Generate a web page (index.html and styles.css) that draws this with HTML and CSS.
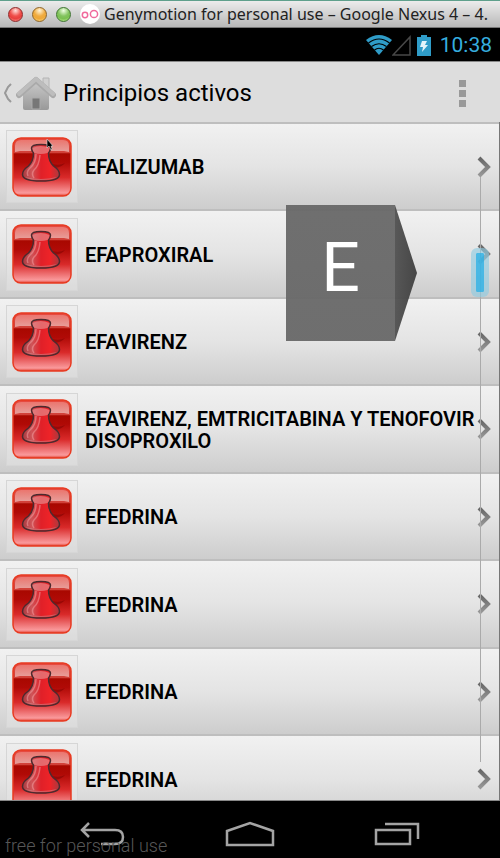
FILE: index.html
```
<!DOCTYPE html>
<html lang="es">
<head>
<meta charset="utf-8">
<meta name="viewport" content="width=device-width, initial-scale=1">
<title>Principios activos</title>
<link rel="stylesheet" href="styles.css">
</head>
<body>
<svg class="defs" aria-hidden="true">
  <defs>
    <linearGradient id="tile" x1="0" y1="0" x2="0" y2="1">
      <stop offset="0" stop-color="#e84a40"/><stop offset=".26" stop-color="#d04038"/>
      <stop offset=".27" stop-color="#a80800"/><stop offset=".42" stop-color="#b00a06"/>
      <stop offset=".68" stop-color="#d92a2a"/><stop offset=".95" stop-color="#fa9a9c"/><stop offset="1" stop-color="#e04030"/>
    </linearGradient>
    <linearGradient id="gloss" x1="0" y1="0" x2="0" y2="1">
      <stop offset="0" stop-color="#fff" stop-opacity=".25"/><stop offset="1" stop-color="#fff" stop-opacity=".5"/>
    </linearGradient>
    <linearGradient id="glass" x1="0" y1="0" x2="1" y2="0">
      <stop offset="0" stop-color="#a83a40"/><stop offset=".25" stop-color="#cf5458"/><stop offset=".5" stop-color="#e02028"/>
      <stop offset=".75" stop-color="#ee2428"/><stop offset="1" stop-color="#a83a40"/>
    </linearGradient>
    <linearGradient id="house" x1="0" y1="0" x2="0" y2="1">
      <stop offset="0" stop-color="#c8c8c8"/><stop offset="1" stop-color="#999"/>
    </linearGradient>
    <linearGradient id="chev" x1="0" y1="0" x2="0" y2="1">
      <stop offset="0" stop-color="#666"/><stop offset="1" stop-color="#999"/>
    </linearGradient>
    <symbol id="flask" viewBox="0 0 60 60">
      <rect x="1" y="1" width="58" height="58" rx="8" fill="url(#tile)" stroke="#e83a20" stroke-width="1.5"/>
      <path d="M3 15V9q0-6 6-6h42q6 0 6 6v6l-5-1H8z" fill="url(#gloss)"/>
      <path d="M40 27q8 2 13-1-3 4-10 5z" fill="#700" opacity=".5"/>
      <path d="M19.500 11q0-3.500 9.500-3.500t9.500 3.500q0 3-2 5 0 8 5 13 6 4 6 8.500 0 6.500-18.500 6.500T10.500 37.500q0-4.500 6-8.500 5-5 5-13-2-2-2-5z" fill="url(#glass)" stroke="#4c2a2e" stroke-width="1.500"/>
      <path d="M20.500 11q8-4 17 0 0 3-2 5-7 2-13 0-2-2-2-5z" fill="#e89a9a" opacity=".6"/>
      <path d="M24 17q0 9-6 14-4 4-2 8M28 18q-1 11-6 15-3 4 0 8" fill="none" stroke="#f4a3a5" stroke-width="1.500" opacity=".5"/>
      <path d="M13 40q16 4 32 0-4 3-16 3t-16-3z" fill="#c9898c" opacity=".6"/>
    </symbol>
    <symbol id="next" viewBox="0 0 14 22">
      <path d="M2 2l9 9-9 9" fill="none" stroke="url(#chev)" stroke-width="4"/>
    </symbol>
  </defs>
</svg>
<div class="window">
  <header class="titlebar">
    <span class="light red"></span><span class="light amber"></span><span class="light green"></span>
    <svg class="app-logo" viewBox="0 0 20 20" aria-hidden="true"><circle cx="10" cy="10" r="10" fill="#fff"/><circle cx="5" cy="11" r="2.7" fill="none" stroke="#f06a9c" stroke-width="1.5"/><circle cx="14" cy="10" r="3.6" fill="none" stroke="#f06a9c" stroke-width="1.5"/></svg>
    <span class="window-name">Genymotion for personal use – Google Nexus 4 – 4.</span>
  </header>
  <div class="status">
    <svg width="26" height="20" viewBox="0 0 26 20" aria-hidden="true"><path d="M0 5Q13-5 26 5L13 20z" fill="#2f9cc8"/><path d="M2.500 8Q13 0 23.500 8M5.500 11.500Q13 6 20.500 11.500M8.500 15Q13 11.500 17.500 15" fill="none" stroke="#000" stroke-width="1.200"/></svg>
    <svg width="20" height="21" viewBox="0 0 20 21" aria-hidden="true"><path d="M1 20H18V2z" fill="none" stroke="#484848" stroke-width="1.500"/></svg>
    <svg class="battery" width="14" height="21" viewBox="0 0 14 21" aria-hidden="true"><path d="M4 0h6v2h4v19H0V2h4z" fill="#2f9cc8"/><path d="M5 6h5L8 10h3L5 17l1-5H3z" fill="#e4f4fa"/></svg>
    <time>10:38</time>
  </div>
  <div class="actionbar">
    <button class="up" aria-label="Inicio">
      <svg width="8" height="20" viewBox="0 0 8 20"><path d="M7 1L4 4Q2 8 1 10q1 2 3 6l3 3" fill="none" stroke="#999" stroke-width="2"/></svg>
      <svg width="40" height="36" viewBox="0 0 40 36"><path d="M27 3h6v10h-6z" fill="#d0d0d0" stroke="#b4b4b4"/><path d="M7 18L20 7l13 11v15q0 2-2 2H9q-2 0-2-2z" fill="url(#house)"/><path d="M3 20L20 5l17 15" fill="none" stroke="#aaa" stroke-width="6" stroke-linecap="round" stroke-linejoin="round"/><path d="M3 19L20 4l17 15" fill="none" stroke="#bdbdbd" stroke-width="4" stroke-linecap="round" stroke-linejoin="round"/><path d="M16 23h8v11h-8z" fill="#777" stroke="#aaa"/></svg>
    </button>
    <h1>Principios activos</h1>
    <button class="more" aria-label="Más opciones"><i></i><i></i><i></i></button>
  </div>
  <main class="content">
    <ul class="list">
      <li><a href="#"><span class="thumb"><svg><use href="#flask"/></svg></span><span class="name">EFALIZUMAB</span><svg class="next"><use href="#next"/></svg></a></li>
      <li><a href="#"><span class="thumb"><svg><use href="#flask"/></svg></span><span class="name">EFAPROXIRAL</span><svg class="next"><use href="#next"/></svg></a></li>
      <li><a href="#"><span class="thumb"><svg><use href="#flask"/></svg></span><span class="name">EFAVIRENZ</span><svg class="next"><use href="#next"/></svg></a></li>
      <li><a href="#"><span class="thumb"><svg><use href="#flask"/></svg></span><span class="name">EFAVIRENZ, EMTRICITABINA Y TENOFOVIR DISOPROXILO</span><svg class="next"><use href="#next"/></svg></a></li>
      <li><a href="#"><span class="thumb"><svg><use href="#flask"/></svg></span><span class="name">EFEDRINA</span><svg class="next"><use href="#next"/></svg></a></li>
      <li><a href="#"><span class="thumb"><svg><use href="#flask"/></svg></span><span class="name">EFEDRINA</span><svg class="next"><use href="#next"/></svg></a></li>
      <li><a href="#"><span class="thumb"><svg><use href="#flask"/></svg></span><span class="name">EFEDRINA</span><svg class="next"><use href="#next"/></svg></a></li>
      <li><a href="#"><span class="thumb"><svg><use href="#flask"/></svg></span><span class="name">EFEDRINA</span><svg class="next"><use href="#next"/></svg></a></li>
    </ul>
    <div class="track"></div>
    <div class="handle"></div>
    <div class="index-letter"><span>E</span></div>
    <svg class="pointer" width="8" height="13" viewBox="0 0 8 13" aria-hidden="true"><path d="M1 1v9l2-2 2 4 1-1-1-3h2z" fill="#000" stroke="#ddd" stroke-width=".6"/></svg>
  </main>
  <nav class="navbar">
    <button aria-label="Atrás"><svg width="46" height="26" viewBox="0 0 46 26"><path d="M9 2L2 9l7 7M2 9h33q8 0 8 7t-8 7H21" fill="none" stroke="#a4a4a4" stroke-width="2.500"/></svg></button>
    <button aria-label="Inicio"><svg width="50" height="26" viewBox="0 0 50 26"><path d="M2 10L25 2l23 8v14H2z" fill="none" stroke="#a4a4a4" stroke-width="2.500"/></svg></button>
    <button aria-label="Recientes"><svg width="46" height="26" viewBox="0 0 46 26"><path d="M2 9h34v14H2zM11 3h33v15" fill="none" stroke="#a4a4a4" stroke-width="2.500"/></svg></button>
    <span class="watermark">free for personal use</span>
  </nav>
</div>
</body>
</html>
```
FILE: styles.css
```
* { box-sizing: border-box; }
body { margin: 0; font-family: Roboto, "Liberation Sans", sans-serif; color: #000; }
button { background: none; border: 0; padding: 0; }
svg { display: block; flex: none; }
.defs { position: absolute; width: 0; height: 0; }
.window { display: flex; flex-direction: column; height: 100vh; background: #000; overflow: hidden; }

.titlebar { display: flex; align-items: center; height: 28px; padding-left: 8px; flex: none; border-top: 1px solid #5fa08c; border-bottom: 1px solid #777; background: linear-gradient(#ececec, #b8b8b8); white-space: nowrap; overflow: hidden; }
.light { flex: none; width: 15px; height: 15px; margin-right: 9px; border-radius: 50%; border: 1px solid; }
.red { background: radial-gradient(circle at 50% 20%, #ffe0dc, #f0504c 45%, #e8403e 65%, #ff9c94); border-color: #8e2a2a; }
.amber { background: radial-gradient(circle at 50% 20%, #fff4d8, #f0ac40 45%, #eea838 65%, #ffe28c); border-color: #8e6425; }
.green { background: radial-gradient(circle at 50% 20%, #f0ffe4, #84c460 45%, #7ac050 65%, #c8f49c); border-color: #3e7430; }
.app-logo { width: 20px; height: 20px; margin-right: 4px; }
.window-name { font: 16px "Noto Sans", sans-serif; color: #222; }

.status { display: flex; align-items: center; justify-content: flex-end; height: 33px; flex: none; padding: 1px 8px 0 0; color: #36addf; font-size: 21px; }
.battery { margin: 0 9px 0 5px; }

.actionbar { display: flex; align-items: center; height: 61px; flex: none; padding: 2px 34px 0 4px; background: #ddd; border-top: 1px solid #888; }
.up { display: flex; align-items: center; margin-right: 7px; gap: 4px; }
.actionbar h1 { margin: 0; font-size: 24px; font-weight: 400; }
.more { display: grid; gap: 3px; margin-left: auto; }
.more i { width: 7px; height: 7px; background: #999; }

.content { position: relative; flex: 1; min-height: 0; overflow: hidden; border-right: 1px solid #777; border-bottom: 1px solid #888; }
.list { list-style: none; margin: 0; padding: 0; }
.list li { height: 87px; border-top: 2px solid #bebebe; background: linear-gradient(#f1f1f1, #e4e4e4 50%, #cdcdcd); }
.list li:nth-child(even) { height: 88px; }
.list a { display: flex; align-items: center; height: 100%; padding: 0 8px 0 6px; color: #000; text-decoration: none; }
.thumb { display: grid; place-items: center; width: 72px; height: 73px; margin-right: 7px; flex: none; border: 1px solid #d6d6d6; background: #ececec66; }
.thumb svg { width: 60px; height: 60px; }
.name { flex: 1; padding-top: 1px; font-size: 20px; line-height: 22px; font-weight: 600; }
.next { width: 14px; height: 22px; }

.track { position: absolute; top: 55px; bottom: 38px; right: 18px; width: 1px; background: #aaa; }
.handle { position: absolute; top: 126px; right: 10px; width: 18px; height: 49px; border: 5px solid #8ccbe29c; border-radius: 6px; background: #38b4e4e6; background-clip: padding-box; }
.index-letter { position: absolute; top: 83px; right: 82px; width: 131px; height: 136px; padding: 0 22px 10px 0; display: grid; place-items: center; color: #fff; font-size: 68px; line-height: 1; background: linear-gradient(90deg, #686868f2 109px, #505050f2 109px, #3e3e3ef2); clip-path: polygon(0 0, 109px 0, 100% 50%, 109px 100%, 0 100%); }
.pointer { position: absolute; left: 46px; top: 16px; }

.navbar { position: relative; display: flex; align-items: center; justify-content: space-between; height: 57px; flex: none; padding: 8px 80px 0; }
.watermark { position: absolute; left: 5px; bottom: 1px; font-size: 18px; font-weight: 300; line-height: 22px; color: #575757; }
```
